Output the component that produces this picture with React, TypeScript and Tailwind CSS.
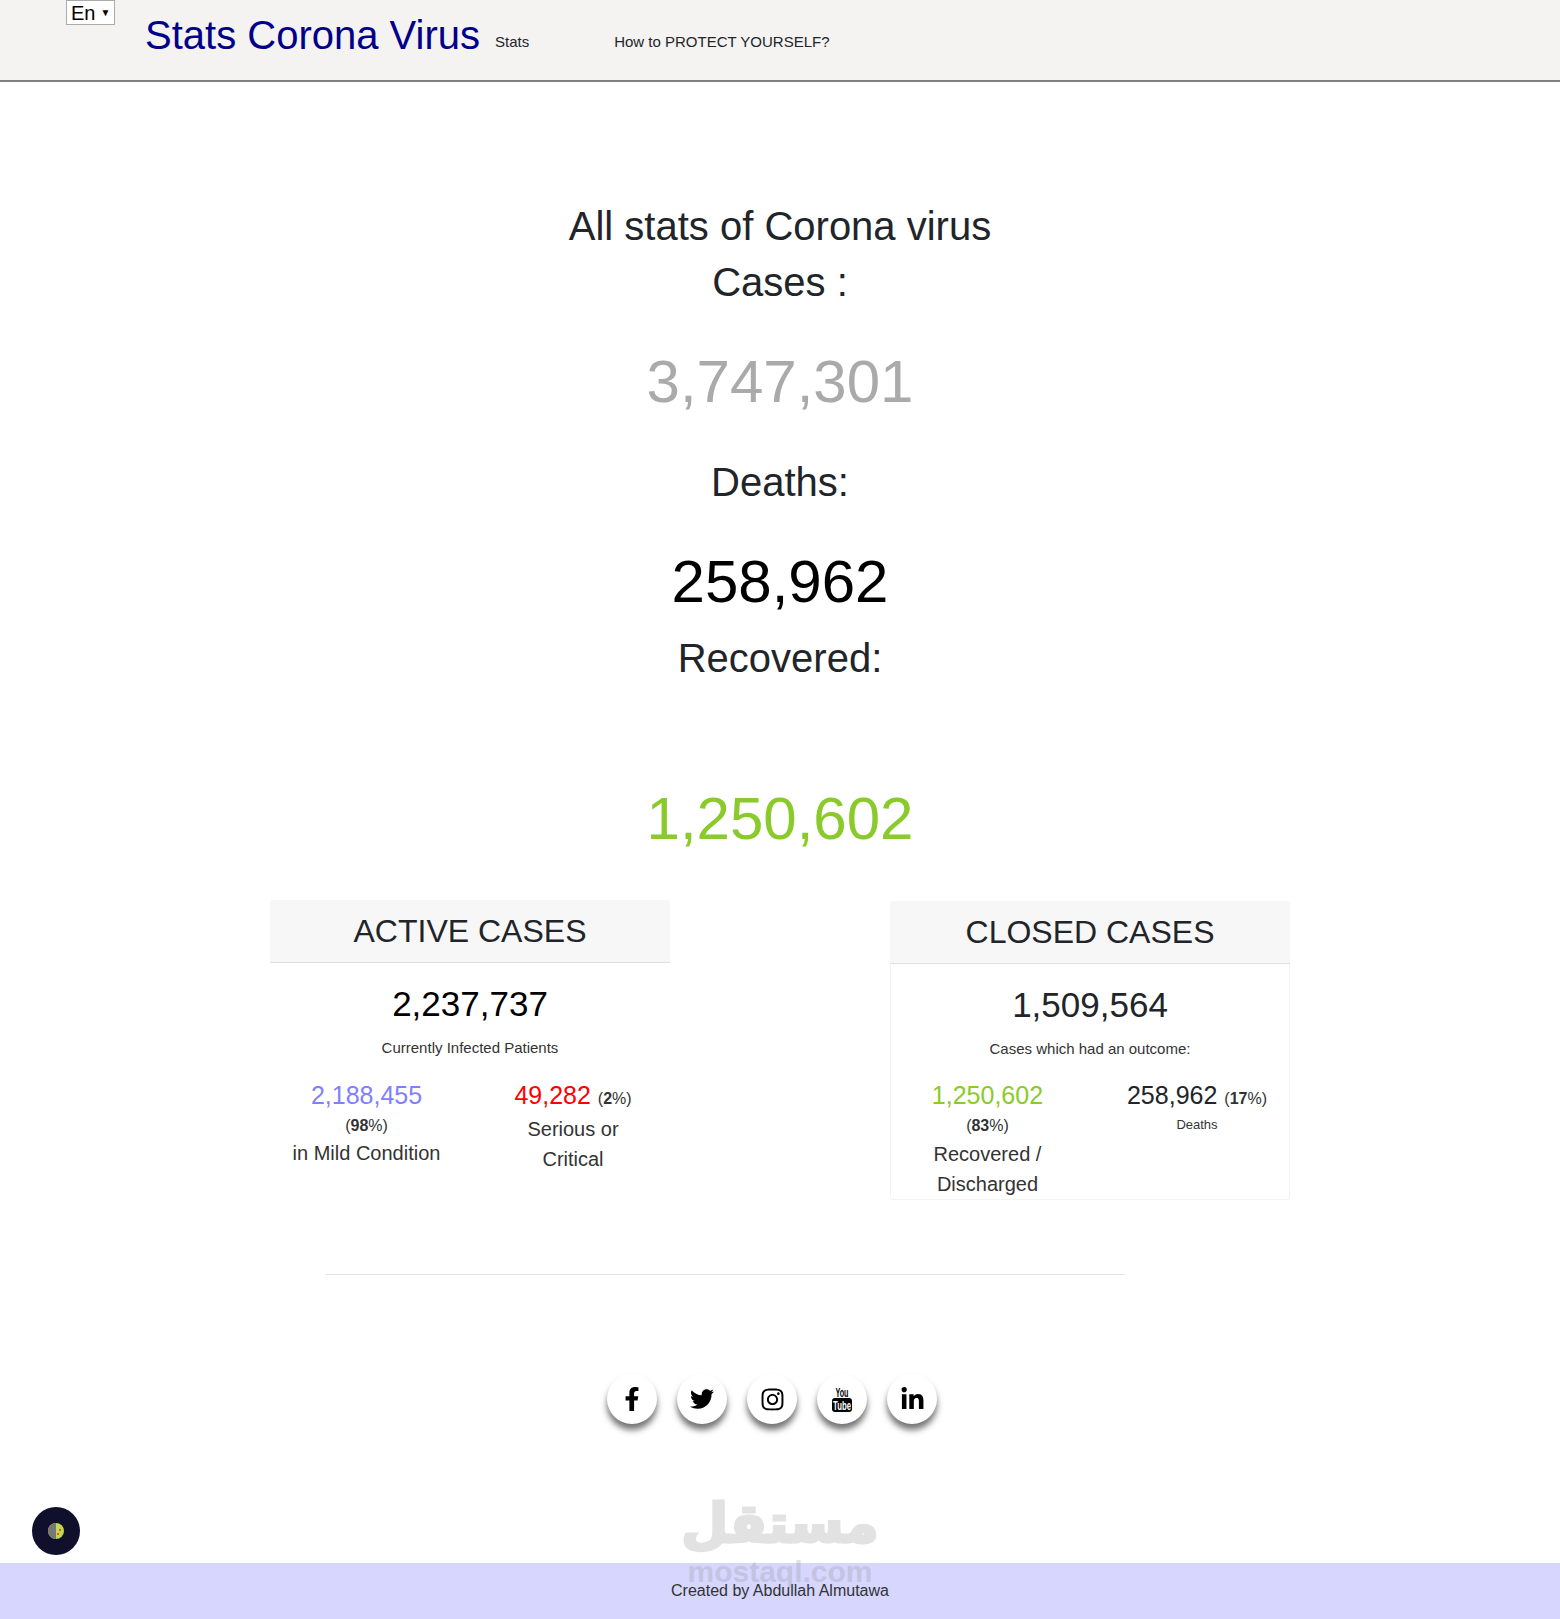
import React from 'react';
import { FaFacebookF, FaInstagram, FaLinkedinIn, FaTwitter } from 'react-icons/fa';

const Pct: React.FC<{ value: string }> = ({ value }) => (
  <span className="text-[16px] text-[#333]">
    (<strong className="font-bold">{value}</strong>%)
  </span>
);

const StatHeading: React.FC<{ children: React.ReactNode; className: string }> = ({ children, className }) => (
  <div className={`text-center text-[40px] text-[#212529] ${className}`}>{children}</div>
);

// old stacked logo, the icon packs only have the play button one
const YouTubeStacked = () => (
  <svg viewBox="-4 -2 30 29" className="h-[29px] w-[30px] overflow-visible" aria-hidden="true">
    <text x="11" y="10" textAnchor="middle" textLength="13" lengthAdjust="spacingAndGlyphs" fontSize="12" fontWeight="700" fontFamily="Liberation Sans" fill="#000">You</text>
    <rect x="1" y="11" width="20" height="14" rx="3" fill="#000" />
    <text x="11" y="22.5" textAnchor="middle" textLength="18" lengthAdjust="spacingAndGlyphs" fontSize="13" fontWeight="700" fontFamily="Liberation Sans" fill="#fff">Tube</text>
  </svg>
);

const socials = [
  { label: 'Facebook', icon: <FaFacebookF className="h-[24px] w-[22px]" /> },
  { label: 'Twitter', icon: <FaTwitter className="h-[24px] w-[24px]" /> },
  { label: 'Instagram', icon: <FaInstagram className="h-[25px] w-[25px]" /> },
  { label: 'YouTube', icon: <YouTubeStacked /> },
  { label: 'LinkedIn', icon: <FaLinkedinIn className="h-[25px] w-[25px]" /> },
];

export default function App() {
  return (
    <div className="relative h-[1619px] overflow-hidden bg-white font-['Liberation_Sans',Arial,sans-serif] text-[#212529]">
      <header className="flex h-[82px] items-start border-b-2 border-[#808080] bg-[#f4f3f2] pl-[66px]">
        <div className="flex h-[25px] w-[49px] items-center gap-[5px] border border-[#aaa] bg-white pl-[4px] text-[20px] text-black">
          En <span className="text-[10px]">▼</span>
        </div>
        <h1 className="ml-[30px] mt-[11px] text-[40px] leading-[48px] text-[#00008b]">Stats Corona Virus</h1>
        <a className="ml-[15px] mt-[33px] text-[15px] leading-[18px] text-[#212529]">Stats</a>
        <a className="ml-[85px] mt-[33px] text-[15px] leading-[18px] text-[#212529]">How to PROTECT YOURSELF?</a>
      </header>

      <main>
        <StatHeading className="mt-[116px] leading-[56px]">All stats of Corona virus</StatHeading>
        <StatHeading className="leading-[56px]">Cases :</StatHeading>
        <div className="mt-[36px] text-center text-[60px] leading-[72px] text-[#aaaaaa]">3,747,301</div>
        <StatHeading className="mt-[36px] leading-[56px]">Deaths:</StatHeading>
        <div className="mt-[36px] text-center text-[60px] leading-[72px] text-black">258,962</div>
        <StatHeading className="mt-[12px] leading-[56px]">Recovered:</StatHeading>
        <div className="mt-[97px] text-center text-[60px] leading-[72px] text-[#8aca2b]">1,250,602</div>

        <div className="mt-[45px] flex items-start justify-center gap-[220px]">
          <section className="h-[299px] w-[400px]">
            <div className="h-[63px] rounded-t-[3px] border-b border-[#dfdfdf] bg-[#f7f7f7] text-center text-[32px] leading-[62px] text-[#212529]">ACTIVE CASES</div>
            <div className="mt-[20px] text-center text-[35px] leading-[42px] text-black">2,237,737</div>
            <div className="mt-[13px] text-center text-[15px] leading-[20px] text-[#333]">Currently Infected Patients</div>
            <div className="mt-[21px] flex gap-[13px]">
              <div className="w-[193px] text-center">
                <div className="text-[25px] leading-[32px] text-[#8080ff]">2,188,455</div>
                <div className="mt-[3px] leading-[24px]"><Pct value="98" /></div>
                <div className="text-[20px] leading-[30px] text-[#333]">in Mild Condition</div>
              </div>
              <div className="w-[194px] text-center">
                <div className="text-[25px] leading-[32px] text-[#ff0000]">49,282 <Pct value="2" /></div>
                <div className="mx-auto -mt-px w-[130px] text-[20px] leading-[30px] text-[#333]">Serious or Critical</div>
              </div>
            </div>
          </section>

          <section className="mt-[1px] h-[299px] w-[400px] rounded-[3px] border-x border-b border-[#f3f3f3]">
            <div className="-mx-px h-[63px] rounded-t-[3px] border-b border-[#dfdfdf] bg-[#f7f7f7] text-center text-[32px] leading-[62px] text-[#212529]">CLOSED CASES</div>
            <div className="mt-[20px] text-center text-[35px] leading-[42px] text-[#212529]">1,509,564</div>
            <div className="mt-[13px] text-center text-[15px] leading-[20px] text-[#333]">Cases which had an outcome:</div>
            <div className="mt-[20px] flex gap-[21px]">
              <div className="w-[195px] text-center">
                <div className="text-[25px] leading-[32px] text-[#8aca2b]">1,250,602</div>
                <div className="mt-[3px] leading-[24px]"><Pct value="83" /></div>
                <div className="mx-auto mt-px w-[130px] text-[20px] leading-[30px] text-[#333]">Recovered / Discharged</div>
              </div>
              <div className="w-[186px] text-center">
                <div className="text-[25px] leading-[32px] text-[#212529]">258,962 <Pct value="17" /></div>
                <div className="text-[13px] leading-[20px] text-[#333]">Deaths</div>
              </div>
            </div>
          </section>
        </div>

        <hr className="ml-[325px] mt-[74px] w-[800px] border-t border-[#e5e5e5]" />

        <div className="mt-[99px] flex justify-center gap-[20px] pr-[16px]">
          {socials.map(s => (
            <a key={s.label} aria-label={s.label} className="flex h-[50px] w-[50px] items-center justify-center rounded-full bg-white text-black shadow-[0_6px_6px_rgba(0,0,0,0.55)]">
              {s.icon}
            </a>
          ))}
        </div>
      </main>

      {/* floating dark mode toggle */}
      <div className="absolute left-[32px] top-[1507px] flex h-[48px] w-[48px] items-center justify-center rounded-full bg-[#100f2c]">
        <div className="relative h-[16px] w-[16px] overflow-hidden rounded-full bg-[#c0d94e]">
          <div className="h-full w-1/2 bg-[#777]" />
          <div className="absolute left-[11px] top-[6px] h-[2px] w-[2px] rounded-full bg-[#ff2020]" />
          <div className="absolute left-[9px] top-[10px] h-[2px] w-[2px] rounded-full bg-[#ff2020]" />
        </div>
      </div>

      <footer className="absolute inset-x-0 bottom-0 h-[56px] bg-[#d6d6ff] pt-[18px] text-center text-[16px] leading-[20px] text-[#333]">
        Created by Abdullah Almutawa
      </footer>

      {/* mostaql watermark sits over the footer */}
      <div className="pointer-events-none absolute left-[640px] top-[1494px] w-[280px] text-center font-['DejaVu_Sans',sans-serif] font-bold text-[#8f8f8f] opacity-25">
        <div dir="rtl" lang="ar" className="text-[54px] leading-[60px] [-webkit-text-stroke:3px_#8f8f8f]">مستقل</div>
        <div className="font-['Liberation_Sans',sans-serif] text-[30px] leading-[36px]">mostaql.com</div>
      </div>
    </div>
  );
}
